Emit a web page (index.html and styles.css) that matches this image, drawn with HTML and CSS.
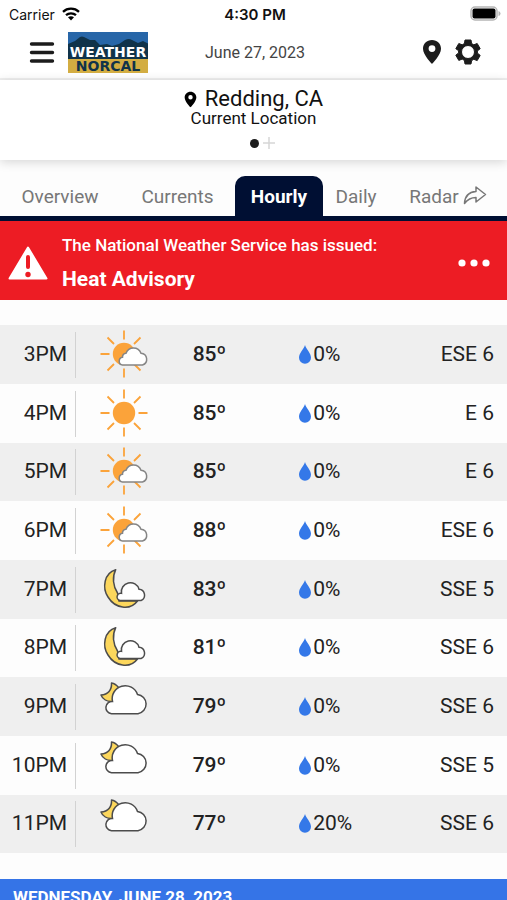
FILE: index.html
```html
<!DOCTYPE html>
<html lang="en">
<head>
  <meta charset="UTF-8">
  <meta name="viewport" content="width=device-width, initial-scale=1">
  <title>Weather NorCal - Hourly</title>
  <link rel="stylesheet" href="styles.css">
</head>
<body>
  <!-- shared icons -->
  <svg class="sprite" aria-hidden="true">
    <symbol id="pin" viewBox="0 0 20 26">
      <path d="M10 1C4.800 1 1 4.900 1 9.800 1 16 10 25 10 25s9-9 9-15.200C19 4.900 15.200 1 10 1zm0 12a3.400 3.400 0 1 1 0-6.800 3.400 3.400 0 0 1 0 6.800z"/>
    </symbol>
    <symbol id="drop" viewBox="0 0 12 19">
      <path fill="#3478e8" d="M6 0C5 4 0 8 0 12.800a6 6 0 0 0 12 0C12 8 7 4 6 0z"/>
    </symbol>
    <symbol id="sun" viewBox="0 0 50 50">
      <circle cx="25" cy="25" r="11.200" fill="#fba33a"/>
      <path stroke="#fba33a" stroke-width="1.800" d="M25 1.500v9M25 39.500v9M1.500 25h9M39.500 25h9M8.500 8.500l6.500 6.500M35 35l6.500 6.500M8.500 41.500l6.500-6.500M35 15l6.500-6.500"/>
    </symbol>
    <symbol id="partly" viewBox="0 0 50 50">
      <circle cx="25" cy="25" r="11.200" fill="#fba33a"/>
      <path stroke="#fba33a" stroke-width="1.800" d="M25 1.500v9M25 39.500v9M1.500 25h9M8.500 8.500l6.500 6.500M35 35l6.500 6.500M8.500 41.500l6.500-6.500M35 15l6.500-6.500"/>
      <path fill="#fff" stroke="#858585" stroke-width="1.500" d="M23.500 36A3.900 3.900 0 0 1 23.500 28.300A4 4 0 0 1 27 24.300A8 8 0 0 1 42 24.300A6 6 0 0 1 43.500 36z"/>
    </symbol>
    <symbol id="moon" viewBox="0 0 50 50">
      <path fill="#fcd75c" stroke="#4c4c4c" stroke-width="1.500" stroke-linejoin="round" d="M16.700 5.700C5 9 3 24 9 33 16 44.500 31 47 38.500 37H20L18.500 29C14 22 13 13 16.700 5.700z"/>
      <path fill="#fff" stroke="#4c4c4c" stroke-width="1.500" d="M21 36.500A3.600 3.600 0 0 1 22.500 29.300A9 9 0 0 1 40 25.200A5.900 5.900 0 0 1 42 36.500z"/>
    </symbol>
    <symbol id="cloudy" viewBox="0 0 50 50">
      <path fill="#fcd75c" stroke="#4c4c4c" stroke-width="1.500" stroke-linejoin="round" d="M12.500 2C13 9 9 13.500 2 14 3.500 18 8 21 14 20.500L20 7C18 4.500 16 2.500 12.500 2z"/>
      <path fill="#fff" stroke="#4c4c4c" stroke-width="1.500" d="M12.500 32.700A6 6 0 0 1 13.500 20.500A13 13 0 0 1 38.500 13.500A9.700 9.700 0 0 1 39 32.700z"/>
    </symbol>
  </svg>

  <div class="status">
    <span class="carrier">Carrier
      <svg width="18" height="14" viewBox="0 0 18 14" aria-hidden="true">
        <path fill="none" stroke="#000" stroke-width="2.300" d="M1 4.800c4.500-4.200 11.500-4.200 16 0M4 8.200c2.800-2.500 7.200-2.500 10 0"/>
        <path d="M9 13.500l-3-3.200c1.700-1.500 4.300-1.500 6 0z"/>
      </svg>
    </span>
    <b>4:30 PM</b>
    <svg class="battery" width="31" height="16" viewBox="0 0 31 16" aria-hidden="true">
      <rect x="1" y="1" width="26" height="13" rx="4" fill="#fff" stroke="#b5b5b5" stroke-width="1.500"/>
      <rect x="2.500" y="2.500" width="23" height="10" rx="2"/>
      <path fill="#b5b5b5" d="M28.500 5q2 .500 2 2.500t-2 2.500z"/>
    </svg>
  </div>

  <header class="topbar">
    <div class="left">
      <button class="icon-btn" aria-label="Menu">
        <svg width="26" height="24" viewBox="0 0 26 24"><path stroke="#1c1c1c" stroke-width="3.400" stroke-linecap="round" d="M2.500 4h21M2.500 12.500h21M2.500 21h21"/></svg>
      </button>
      <a href="#" aria-label="Weather NorCal home">
        <svg class="logo" width="80" height="41" viewBox="0 0 80 41">
          <path fill="#2766a8" d="M0 0h80v28H0z"/>
          <path fill="#10334a" d="M0 12l7-3 5-4q2-1 4 0l6 3 5 0 5 5 7-1 5 2 7-2 6-4q4-2 7 0l6 3 5-2 6 3v16H0z"/>
          <path fill="#d3ad42" d="M0 27h80v14H0z"/>
          <text x="40" y="25" text-anchor="middle" fill="#fff">WEATHER</text>
          <text x="40" y="39" text-anchor="middle" fill="#10334a">NORCAL</text>
        </svg>
      </a>
    </div>
    <span class="date">June 27, 2023</span>
    <div class="right">
      <button class="icon-btn" aria-label="Locations"><svg width="20" height="26"><use href="#pin"/></svg></button>
      <button class="icon-btn" aria-label="Settings">
        <svg width="26" height="26" viewBox="0 0 26 26">
          <path fill="#1c1c1c" fill-rule="evenodd" stroke="#1c1c1c" stroke-linejoin="round" d="M10 1h6l.600 3.600 2.200 1.200 3.400-1.300 3 5.200-2.800 2.200v2.200l2.800 2.300-3 5.200-3.400-1.300-2.200 1.300L16 25h-6l-.600-3.600-2.200-1.300-3.400 1.300-3-5.200 2.800-2.300v-2.200L.800 9.700l3-5.200 3.400 1.300 2.200-1.200zM13 6.500a6.500 6.500 0 1 0 0 13 6.500 6.500 0 0 0 0-13z"/>
        </svg>
      </button>
    </div>
  </header>

  <section class="location">
    <h1><svg width="13" height="17" aria-hidden="true"><use href="#pin"/></svg>Redding, CA</h1>
    <p>Current Location</p>
    <div class="pager"><span class="dot"></span><button aria-label="Add location"><svg width="14" height="14" viewBox="0 0 14 14"><path stroke="#d6d6d6" stroke-width="1.500" d="M7 1v12M1 7h12"/></svg></button></div>
  </section>

  <nav class="tabs">
    <a href="#">Overview</a>
    <a href="#">Currents</a>
    <a href="#" class="active">Hourly</a>
    <a href="#">Daily</a>
    <a href="#">Radar
      <svg width="24" height="20" viewBox="0 0 24 20" aria-hidden="true"><path fill="none" stroke="#777" stroke-width="1.500" stroke-linejoin="round" d="M13 1l9.500 7.500L13 16v-4.500C7.500 11.500 4.500 13.500 1.500 17.500 1.800 11 5.500 6 13 5.500z"/></svg>
    </a>
  </nav>

  <div class="alert">
    <svg width="40" height="34" viewBox="0 0 40 34" aria-hidden="true">
      <path fill="#fff" stroke="#fff" stroke-width="2" stroke-linejoin="round" d="M20 1.500L38.500 32.500h-37z"/>
      <path stroke="#ed1c24" stroke-width="4" stroke-linecap="round" d="M20 11v10"/>
      <circle cx="20" cy="28.500" r="2.700" fill="#ed1c24"/>
    </svg>
    <div class="alert-text">
      <p>The National Weather Service has issued:</p>
      <h2>Heat Advisory</h2>
    </div>
    <button class="icon-btn" aria-label="Alert details">
      <svg width="32" height="8" viewBox="0 0 32 8"><circle cx="4" cy="4" r="3.600"/><circle cx="16" cy="4" r="3.600"/><circle cx="28" cy="4" r="3.600"/></svg>
    </button>
  </div>

  <table class="hourly" aria-label="Hourly forecast">
    <tbody>
      <tr>
        <th scope="row">3PM</th>
        <td class="sky"><svg><use href="#partly"/></svg></td>
        <td class="temp">85º</td>
        <td class="rain"><svg><use href="#drop"/></svg>0%</td>
        <td class="wind">ESE 6</td>
      </tr>
      <tr>
        <th scope="row">4PM</th>
        <td class="sky"><svg><use href="#sun"/></svg></td>
        <td class="temp">85º</td>
        <td class="rain"><svg><use href="#drop"/></svg>0%</td>
        <td class="wind">E 6</td>
      </tr>
      <tr>
        <th scope="row">5PM</th>
        <td class="sky"><svg><use href="#partly"/></svg></td>
        <td class="temp">85º</td>
        <td class="rain"><svg><use href="#drop"/></svg>0%</td>
        <td class="wind">E 6</td>
      </tr>
      <tr>
        <th scope="row">6PM</th>
        <td class="sky"><svg><use href="#partly"/></svg></td>
        <td class="temp">88º</td>
        <td class="rain"><svg><use href="#drop"/></svg>0%</td>
        <td class="wind">ESE 6</td>
      </tr>
      <tr>
        <th scope="row">7PM</th>
        <td class="sky"><svg><use href="#moon"/></svg></td>
        <td class="temp">83º</td>
        <td class="rain"><svg><use href="#drop"/></svg>0%</td>
        <td class="wind">SSE 5</td>
      </tr>
      <tr>
        <th scope="row">8PM</th>
        <td class="sky"><svg><use href="#moon"/></svg></td>
        <td class="temp">81º</td>
        <td class="rain"><svg><use href="#drop"/></svg>0%</td>
        <td class="wind">SSE 6</td>
      </tr>
      <tr>
        <th scope="row">9PM</th>
        <td class="sky"><svg><use href="#cloudy"/></svg></td>
        <td class="temp">79º</td>
        <td class="rain"><svg><use href="#drop"/></svg>0%</td>
        <td class="wind">SSE 6</td>
      </tr>
      <tr>
        <th scope="row">10PM</th>
        <td class="sky"><svg><use href="#cloudy"/></svg></td>
        <td class="temp">79º</td>
        <td class="rain"><svg><use href="#drop"/></svg>0%</td>
        <td class="wind">SSE 5</td>
      </tr>
      <tr>
        <th scope="row">11PM</th>
        <td class="sky"><svg><use href="#cloudy"/></svg></td>
        <td class="temp">77º</td>
        <td class="rain"><svg><use href="#drop"/></svg>20%</td>
        <td class="wind">SSE 6</td>
      </tr>
    </tbody>
  </table>

  <h2 class="day">WEDNESDAY, JUNE 28, 2023</h2>
</body>
</html>
```
FILE: styles.css
```css
* {
  box-sizing: border-box;
}
html {
  height: 100%;
  overflow: hidden;
}
body {
  margin: 0;
  height: 100%;
  overflow: hidden;
  font-family: Roboto, sans-serif;
  background: #fdfdfd;
  color: #222;
}
h1, h2, p {
  margin: 0;
}
a {
  color: inherit;
  text-decoration: none;
}
button {
  border: none;
  background: none;
  padding: 0;
  cursor: pointer;
}
svg {
  display: block;
  flex-shrink: 0;
}
.sprite {
  position: absolute;
  width: 0;
  height: 0;
}

/* phone status bar */
.status {
  display: grid;
  grid-template-columns: 1fr auto 1fr;
  align-items: center;
  height: 28px;
  padding: 0 6px 0 9px;
  background: #fff;
  font-family: Inter, sans-serif;
  font-size: 14px;
  color: #111;
}
.status b {
  font-size: 15px;
  font-weight: 600;
}
.carrier {
  display: flex;
  align-items: center;
  gap: 7px;
}
.battery {
  justify-self: end;
}

/* top bar */
.topbar {
  display: grid;
  grid-template-columns: 1fr auto 1fr;
  align-items: center;
  height: 52px;
  padding: 0 26px 2px 29px;
  background: #fff;
  border-bottom: 2px solid #f0f0f0;
}
.left, .right {
  display: flex;
  align-items: center;
  gap: 13px;
}
.right {
  justify-content: flex-end;
}
.logo {
  font-family: "DejaVu Sans", sans-serif;
  font-size: 14px;
  font-weight: 700;
}
.date {
  font-size: 16px;
  color: #444;
}
.icon-btn svg {
  fill: #1c1c1c;
}

/* location */
.location {
  display: flex;
  flex-direction: column;
  align-items: center;
  height: 80px;
  padding-top: 8px;
  background: #fff;
  box-shadow: 0 2px 10px rgba(0,0,0,0.16);
  color: #111;
}
.location h1 {
  display: flex;
  align-items: center;
  gap: 8px;
  font-size: 22px;
  line-height: 22px;
  font-weight: 400;
}
.location p {
  font-size: 17px;
  line-height: 17px;
}
.pager {
  display: flex;
  align-items: center;
  gap: 3px;
  margin-top: 9px;
  padding-left: 18px;
}
.dot {
  width: 9px;
  height: 9px;
  border-radius: 50%;
  background: #1c1c1c;
}

/* tabs */
.tabs {
  display: grid;
  grid-template-columns: 120fr 115fr 88fr 66fr 118fr;
  margin-top: 16px;
  border-bottom: 5px solid #000f33;
  font-size: 19px;
  color: #777;
}
.tabs a {
  display: flex;
  align-items: center;
  justify-content: center;
  gap: 4px;
  height: 40px;
}
.tabs .active {
  background: #000f33;
  color: #fff;
  font-weight: 700;
  border-radius: 10px 10px 0 0;
}

/* alert */
.alert {
  display: flex;
  align-items: center;
  gap: 14px;
  height: 79px;
  padding: 4px 17px 0 8px;
  background: #ed1c24;
  color: #fff;
}
.alert-text {
  flex: 1;
  padding-top: 6px;
}
.alert p {
  font-size: 17px;
  line-height: 26px;
  font-weight: 500;
}
.alert h2 {
  font-size: 21px;
  line-height: 42px;
  font-weight: 700;
}
.alert .icon-btn svg {
  fill: #fff;
}

/* hourly table */
.hourly {
  width: 100%;
  margin: 25px 0 26px;
  border-collapse: collapse;
  table-layout: fixed;
  font-size: 21px;
}
.hourly tr {
  height: 59px;
}
.hourly tr:nth-child(3n) {
  height: 58px;
}
.hourly tr:nth-child(odd) {
  background: #efefef;
}
.hourly th, .hourly td {
  padding: 0 0 2px;
}
.hourly th {
  width: 15%;
  padding-right: 9px;
  text-align: right;
  font-weight: 400;
  background: linear-gradient(#d2d2d2, #d2d2d2) right center / 1px 46px no-repeat;
}
.sky {
  width: 23%;
}
.sky svg {
  width: 50px;
  height: 50px;
  margin-left: 23px;
}
.hourly .temp {
  width: 21%;
  font-weight: 500;
}
.rain svg {
  display: inline-block;
  width: 12px;
  height: 19px;
  margin-right: 2px;
  vertical-align: -3px;
}
.wind {
  width: 20%;
}
.hourly .wind {
  padding-right: 13px;
  text-align: right;
}

.day {
  padding: 7px 13px;
  background: #3574e7;
  color: #fff;
  font-size: 17px;
  line-height: 22px;
  font-weight: 700;
}
```
